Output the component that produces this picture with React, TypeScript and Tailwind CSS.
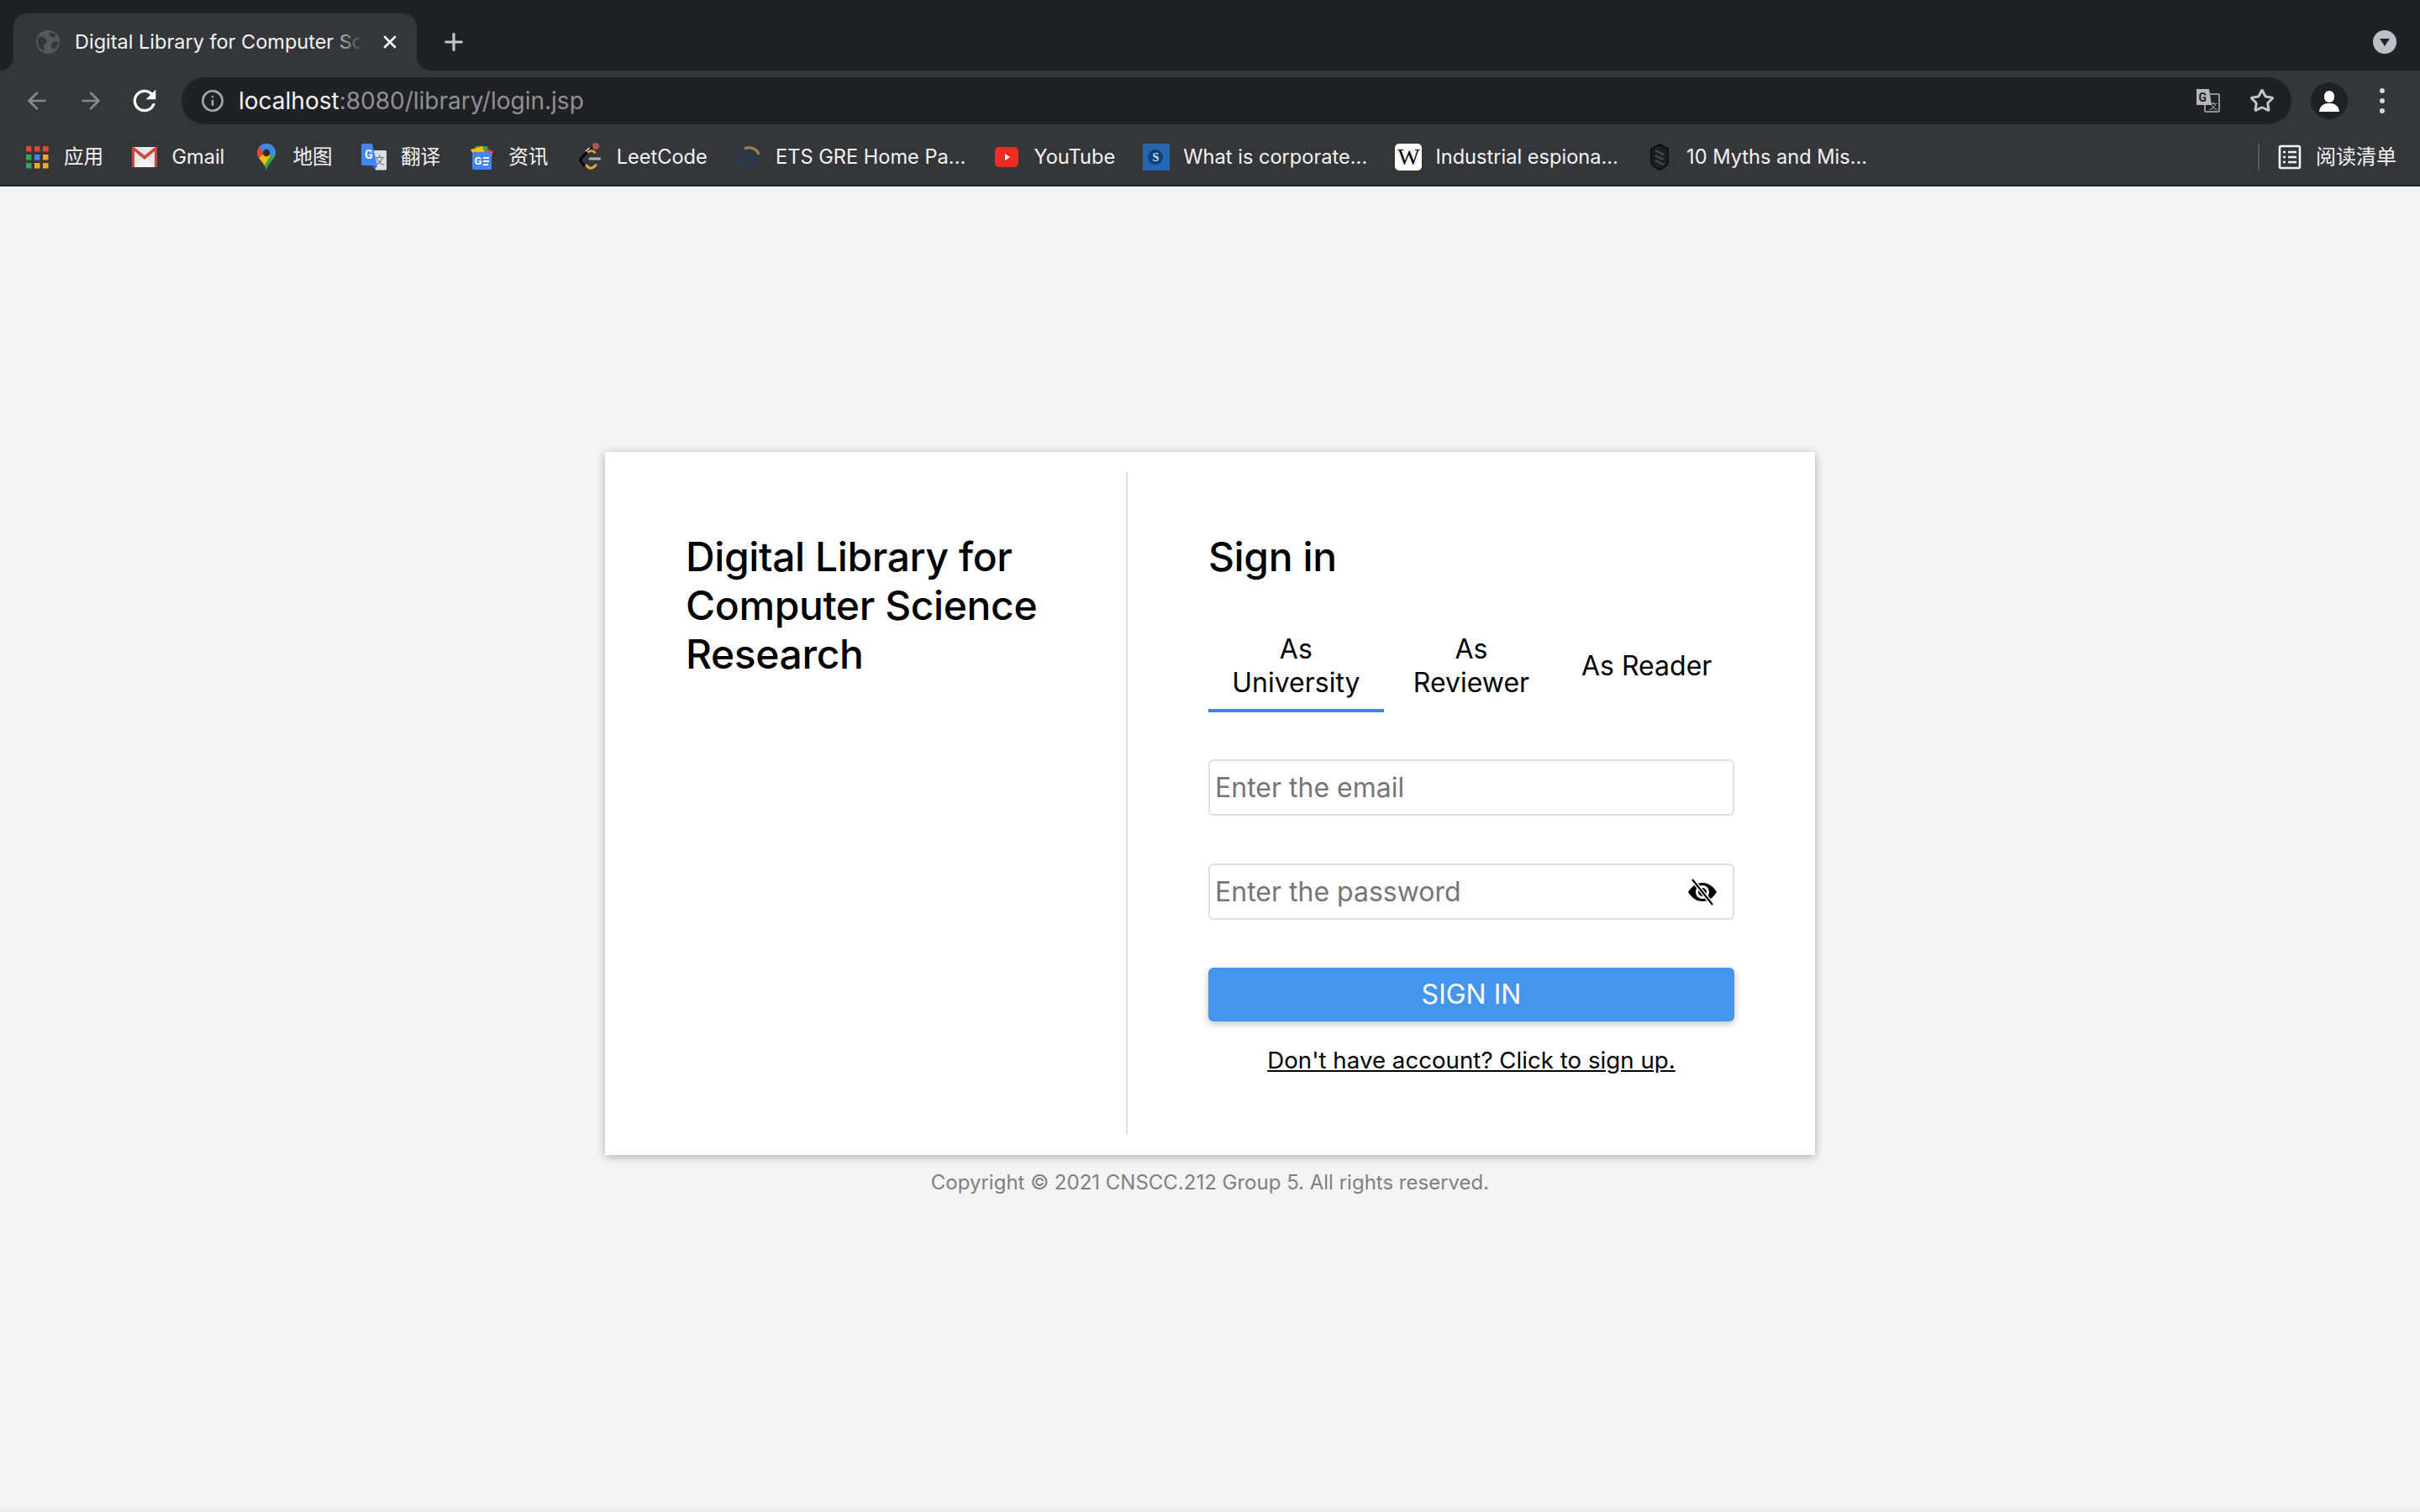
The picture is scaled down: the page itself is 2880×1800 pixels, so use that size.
import { ArrowLeft, ArrowRight, Info, Star, X, Plus } from "lucide-react";

const UI_FONT = "font-['Inter','Noto_Sans_CJK_SC',sans-serif]";

function AppsIcon() {
  const colors = ["#ea4335", "#ea4335", "#ea4335", "#34a853", "#4285f4", "#f4a62a", "#34a853", "#f4a62a", "#f4a62a"];
  return (
    <svg width="30" height="30" viewBox="0 0 30 30">
      {colors.map((c, i) => (
        <rect key={i} x={2 + (i % 3) * 10} y={2 + Math.floor(i / 3) * 10} width="6.5" height="6.5" fill={c} />
      ))}
    </svg>
  );
}

function GmailIcon() {
  return (
    <svg width="32" height="26" viewBox="0 0 32 26">
      <rect x="1" y="1" width="30" height="24" rx="1.5" fill="#e8e8e8" />
      <path d="M4 25V6l12 10L28 6v19h3V2.500C31 1 29.500 .5 28 1.500L16 11 4 1.500C2.500 .5 1 1 1 2.500V25z" fill="#d0463b" />
      <path d="M4 25l10-10 2 1.500 2-1.500 10 10z" fill="#f5f5f5" />
    </svg>
  );
}

function MapsIcon() {
  return (
    <svg width="24" height="34" viewBox="0 0 24 34">
      <path d="M23 12c0 8-9 11-11 21-2-10-11-13-11-21C1 6 6 1 12 1s11 5 11 11z" fill="#34a853" />
      <path d="M12 1C8.500 1 5.500 2.500 3.500 5L9 10l3-1 5-5 2-1c-2-1.300-4.500-2-7-2z" fill="#4285f4" />
      <path d="M3.500 5C2 7 1 9.500 1 12c0 2.500 1 4.500 2.300 6.300L9 13z" fill="#ea4335" />
      <path d="M3.300 18.300C5.500 21 8 23.500 9.500 27L17 15l-8-2z" fill="#fbbc04" />
      <path d="M19 3c2.500 2 4 5.500 4 9l-6 3-3-5z" fill="#4285f4" />
      <circle cx="12" cy="12" r="4.200" fill="#2b2d31" />
    </svg>
  );
}

function TranslateIcon() {
  return (
    <svg width="30" height="32" viewBox="0 0 30 32">
      <path d="M12 8h16.500c.8 0 1.500.7 1.500 1.500V30c0 .8-.7 1.500-1.500 1.500H17z" fill="#dcdfe2" />
      <text x="15" y="24" fontSize="13" fill="#6d7680" fontFamily="'Noto Sans CJK SC', sans-serif">文</text>
      <path d="M1.500 0H13l6 26H1.500C.7 26 0 25.300 0 24.500v-23C0 .7.700 0 1.500 0z" fill="#4285f4" />
      <path d="M13 26h6l-3 5.500z" fill="#3367d6" />
      <text x="4" y="18" fontSize="14" fontWeight="700" fill="#fff" fontFamily="Roboto, sans-serif">G</text>
    </svg>
  );
}

function NewsIcon() {
  return (
    <svg width="30" height="30" viewBox="0 0 30 30">
      <path d="M8 2h14l2 8H7z" fill="#34a853" />
      <path d="M2 6l14-4 3 8H4z" fill="#fbbc04" />
      <path d="M20 5l9 3-2 8-8-2z" fill="#ea4335" />
      <rect x="4" y="9" width="23" height="21" rx="1.500" fill="#4285f4" />
      <text x="6.500" y="24" fontSize="13" fontWeight="700" fill="#fff" fontFamily="Roboto, sans-serif">G</text>
      <path d="M17 15h7v2h-7zM17 19h7v2h-7zM17 23h6v2h-6z" fill="#fff" />
    </svg>
  );
}

function LeetCodeIcon() {
  return (
    <svg width="26" height="34" viewBox="0 0 26 34" fill="none">
      <path d="M16 5 3 18c-1.500 1.700-1.500 3.500 0 5l3 4" stroke="#050505" strokeWidth="3" strokeLinecap="round" />
      <path d="M8 10l5-4" stroke="#f0f0f0" strokeWidth="1.500" />
      <path d="M9 27c3 4 6 4 9 1.500l2-2" stroke="#e5a43a" strokeWidth="3" strokeLinecap="round" />
      <path d="M11 11c2-2 5-2 8 .5" stroke="#e5a43a" strokeWidth="2.500" strokeLinecap="round" />
      <path d="M13 19h12" stroke="#b3b3b3" strokeWidth="3" strokeLinecap="round" />
      <circle cx="20" cy="4" r="4" fill="#b8524a" />
    </svg>
  );
}

function EtsIcon() {
  return (
    <svg width="30" height="30" viewBox="0 0 30 30" fill="none">
      <circle cx="13" cy="16" r="10" stroke="#1c3a63" strokeWidth="2.500" />
      <path d="M10 5c7-3 15 0 17 7" stroke="#a8843c" strokeWidth="3" />
      <path d="M9 16h8" stroke="#1c3a63" strokeWidth="5" strokeDasharray="2 1" />
    </svg>
  );
}

function YouTubeIcon() {
  return (
    <svg width="28" height="24" viewBox="0 0 28 24">
      <rect width="28" height="24" rx="5" fill="#ee2c22" />
      <path d="M12 8l6 4-6 4z" fill="#fff" />
    </svg>
  );
}

function CsoIcon() {
  return (
    <svg width="32" height="32" viewBox="0 0 32 32">
      <rect width="32" height="32" fill="#2467b0" />
      <circle cx="15" cy="16" r="9" fill="#123f78" />
      <text x="11.500" y="21" fontSize="14" fontWeight="700" fill="#cfe3f7" fontFamily="'Liberation Serif', serif">S</text>
    </svg>
  );
}

function WikiIcon() {
  return (
    <div className="w-[32px] h-[32px] rounded-[5px] bg-white flex items-center justify-center overflow-hidden text-[28px] leading-none font-normal text-black font-['Liberation_Serif',serif]">
      W
    </div>
  );
}

function ShieldIcon() {
  return (
    <svg width="24" height="32" viewBox="0 0 24 32" fill="none">
      <path d="M12 1 22 6v15c0 5-5 8-10 10C7 29 2 26 2 21V6z" fill="#1e1f22" stroke="#0a0a0a" strokeWidth="1.500" />
      <path d="M7 8l10 5M7 14l10 5M7 20l10 5" stroke="#4a4b4f" strokeWidth="2" />
    </svg>
  );
}

function ReadingListIcon() {
  return (
    <svg width="28" height="30" viewBox="0 0 28 30" fill="none" stroke="#f1f3f4" strokeWidth="2.600">
      <rect x="2" y="2" width="24" height="26" rx="1.500" />
      <path d="M12 9h10M12 15h10M12 21h10" />
      <path d="M6 9h3M6 15h3M6 21h3" />
    </svg>
  );
}

function ReloadIcon() {
  return (
    <svg width="40" height="40" viewBox="0 0 24 24" fill="#fff">
      <path d="M17.65 6.35A7.958 7.958 0 0 0 12 4c-4.42 0-7.99 3.58-7.99 8s3.57 8 7.99 8c3.730 0 6.840-2.550 7.730-6h-2.080A5.990 5.990 0 0 1 12 18c-3.310 0-6-2.690-6-6s2.690-6 6-6c1.660 0 3.140.690 4.220 1.780L13 11h7V4l-2.350 2.350z" />
    </svg>
  );
}

function EyeOffIcon() {
  return (
    <svg width="36" height="32" viewBox="0 0 36 32">
      <path d="M1 16C6 8 12 5 18 5s12 3 17 11c-5 8-11 11-17 11S6 24 1 16z" fill="#000" />
      <circle cx="18" cy="16" r="8" fill="#fff" />
      <circle cx="18" cy="16" r="5" fill="#000" />
      <path d="M6 1 30 31" stroke="#fff" strokeWidth="5" />
      <path d="M6 1 30 31" stroke="#000" strokeWidth="2.200" />
    </svg>
  );
}

function TranslatePageIcon() {
  return (
    <svg width="30" height="30" viewBox="0 0 30 30">
      <rect x="11" y="7" width="17" height="21" rx="1" fill="#202124" stroke="#b4b6b9" strokeWidth="1.500" />
      <path d="M1 1h15l3 19H1z" fill="#b4b6b9" />
      <text x="3.500" y="16" fontSize="14" fontWeight="700" fill="#202124" fontFamily="Roboto, sans-serif">G</text>
      <text x="16" y="25" fontSize="10" fill="#b4b6b9" fontFamily="'Noto Sans CJK SC', sans-serif">文</text>
    </svg>
  );
}

const BOOKMARKS = [
  { label: "应用", icon: <AppsIcon /> },
  { label: "Gmail", icon: <GmailIcon /> },
  { label: "地图", icon: <MapsIcon /> },
  { label: "翻译", icon: <TranslateIcon /> },
  { label: "资讯", icon: <NewsIcon /> },
  { label: "LeetCode", icon: <LeetCodeIcon /> },
  { label: "ETS GRE Home Pa...", icon: <EtsIcon /> },
  { label: "YouTube", icon: <YouTubeIcon /> },
  { label: "What is corporate...", icon: <CsoIcon /> },
  { label: "Industrial espiona...", icon: <WikiIcon /> },
  { label: "10 Myths and Mis...", icon: <ShieldIcon /> },
];

function TabStrip() {
  return (
    <div className="h-[84px] bg-[#202124] flex items-end pl-[16px] pr-[28px] shrink-0">
      {/* Active tab */}
      <div className="relative w-[480px] h-[68px] bg-[#35363a] rounded-t-[16px] flex items-center pl-[26px] pr-[20px]">
        <div className="absolute left-[-16px] bottom-0 w-[16px] h-[16px] bg-[#35363a]">
          <div className="w-full h-full bg-[#202124] rounded-br-[16px]" />
        </div>
        <div className="absolute right-[-16px] bottom-0 w-[16px] h-[16px] bg-[#35363a]">
          <div className="w-full h-full bg-[#202124] rounded-bl-[16px]" />
        </div>
        <svg width="30" height="30" viewBox="0 0 30 30" className="shrink-0">
          <circle cx="15" cy="15" r="14" fill="#57585c" />
          <path d="M4 9c4-1 7 0 9 3s-1 5-3 6l1 8C5 24 1 17 4 9zM17 3l8 3c-1 3-4 4-6 3s-3-3-2-6zM27 15c0 4-2 7-5 9l-3-3c-1-3 1-6 4-7z" fill="#35363a" />
        </svg>
        <div className="relative ml-[17px] whitespace-nowrap text-[23.5px] leading-[32px] text-[#f1f3f4]">
          Digital Library for Computer Sc
          <div className="absolute right-0 top-0 bottom-0 w-[40px] bg-gradient-to-r from-[#35363a00] to-[#35363a]" />
        </div>
        <X size={24} strokeWidth={2.6} className="ml-auto text-white" />
      </div>
      <Plus size={32} strokeWidth={2.4} className="ml-[28px] mb-[18px] text-[#c4c7ca]" />
      {/* Tab search */}
      <div className="ml-auto mb-[20px] w-[28px] h-[28px] rounded-full bg-[#bdc1c6] flex items-center justify-center">
        <div className="w-0 h-0 border-x-[6px] border-x-transparent border-t-[9px] border-t-[#202124]" />
      </div>
    </div>
  );
}

function Toolbar() {
  return (
    <div className="h-[64px] pt-[8px] bg-[#35363a] flex items-start shrink-0">
      <div className="h-[56px] flex items-center pl-[28px] w-[216px] shrink-0">
        <ArrowLeft size={32} strokeWidth={2} className="text-[#8a8b8e]" />
        <ArrowRight size={32} strokeWidth={2} className="ml-[32px] text-[#8a8b8e]" />
        <div className="ml-[28px]">
          <ReloadIcon />
        </div>
      </div>
      <div className="w-[2511px] h-[56px] rounded-full bg-[#202124] flex items-center pl-[23px] pr-[20px]">
        <Info size={28} strokeWidth={2.2} className="text-[#a4a6a9]" />
        <div className="ml-[17px] text-[28px] leading-none text-[#f1f3f4]">
          localhost<span className="text-[#8f9194]">:8080/library/login.jsp</span>
        </div>
        <div className="ml-auto flex items-center gap-[34px]">
          <TranslatePageIcon />
          <Star size={30} strokeWidth={2.4} className="text-[#c4c7ca]" />
        </div>
      </div>
      <div className="h-[56px] flex items-center flex-1 pl-[23px]">
        <div className="w-[44px] h-[44px] rounded-full bg-[#202124] flex flex-col items-center justify-center">
          <div className="w-[12px] h-[14px] rounded-full bg-white" />
          <div className="w-[24px] h-[10px] rounded-t-[10px] bg-white mt-[1px]" />
        </div>
        <div className="ml-[38px] flex flex-col gap-[6px]">
          <div className="w-[6px] h-[6px] rounded-full bg-[#d5d7da]" />
          <div className="w-[6px] h-[6px] rounded-full bg-[#d5d7da]" />
          <div className="w-[6px] h-[6px] rounded-full bg-[#d5d7da]" />
        </div>
      </div>
    </div>
  );
}

function BookmarkBar() {
  return (
    <div className="h-[74px] pt-[5px] bg-[#35363a] border-b-[2px] border-[#232325] flex items-center pl-[28px] pr-[28px] shrink-0">
      <div className="flex items-center gap-[33.2px]">
        {BOOKMARKS.map((b) => (
          <div key={b.label} className="flex items-center text-[23.6px] leading-[32px] text-[#f1f3f4] whitespace-nowrap">
            <div className="w-[32px] h-[34px] flex items-center justify-center shrink-0">{b.icon}</div>
            <span className="ml-[16px]">{b.label}</span>
          </div>
        ))}
      </div>
      <div className="ml-auto h-[32px] border-l-[2px] border-[#5a5b5f] pl-[22px] flex items-center">
        <ReadingListIcon />
        <span className="ml-[17px] text-[24px] leading-[32px] text-[#f1f3f4] whitespace-nowrap">阅读清单</span>
      </div>
    </div>
  );
}

function RoleTabs() {
  return (
    <div className="mt-[53px] grid grid-cols-3 text-[32px] leading-[40px] text-black text-center">
      <div className="h-[103px] flex items-center justify-center border-b-[4px] border-[#4285dd] px-[24px] pb-[4px]">As University</div>
      <div className="h-[103px] flex items-center justify-center px-[24px] pb-[8px]">As Reviewer</div>
      <div className="h-[103px] flex items-center justify-center px-[4px] pb-[8px]">As Reader</div>
    </div>
  );
}

function LoginCard() {
  return (
    <div className="w-[1440px] h-[837px] bg-white shadow-[0_2px_10px_rgba(0,0,0,0.3)] flex py-[24px]">
      <div className="w-[622px] border-r-[2px] border-[#e0e0e0] pl-[96px] pr-[80px] pt-[72px] shrink-0">
        <h1 className="text-[48px] leading-[58px] text-black font-[450] tracking-[-0.4px]">
          Digital Library for Computer Science Research
        </h1>
      </div>
      <div className="flex-1 pl-[96px] pr-[96px] pt-[72px]">
        <h2 className="text-[48px] leading-[58px] text-black font-[450] tracking-[-0.4px]">Sign in</h2>
        <RoleTabs />
        <div className="mt-[56px] h-[67px] border-[2px] border-[#e0e0e0] rounded-[6px] flex items-center pl-[6px] text-[32px] text-[#757575]">
          Enter the email
        </div>
        <div className="mt-[57px] h-[67px] border-[2px] border-[#e0e0e0] rounded-[6px] flex items-center justify-between pl-[6px] pr-[18px] text-[32px] text-[#757575]">
          Enter the password
          <EyeOffIcon />
        </div>
        <div className="mt-[57px] h-[64px] bg-[#4695ec] rounded-[6px] shadow-[0_3px_8px_rgba(0,0,0,0.25)] flex items-center justify-center text-[32px] text-white">
          SIGN IN
        </div>
        <div className="mt-[28px] text-center text-[27.7px] leading-[36px] text-black underline">
          Don&apos;t have account? Click to sign up.
        </div>
      </div>
    </div>
  );
}

export default function App() {
  return (
    <div className={`h-screen w-full flex flex-col overflow-hidden ${UI_FONT}`}>
      <TabStrip />
      <Toolbar />
      <BookmarkBar />
      <main className="flex-1 bg-[#f4f4f4] flex flex-col items-center pt-[316px] relative">
        <LoginCard />
        <p className="mt-[17px] text-[24px] leading-[32px] text-[#808080]">
          Copyright © 2021 CNSCC.212 Group 5. All rights reserved.
        </p>
        <div className="absolute inset-x-0 bottom-0 h-[6px] bg-gradient-to-b from-[#f4f4f4] to-[#e6e6e6]" />
      </main>
    </div>
  );
}
